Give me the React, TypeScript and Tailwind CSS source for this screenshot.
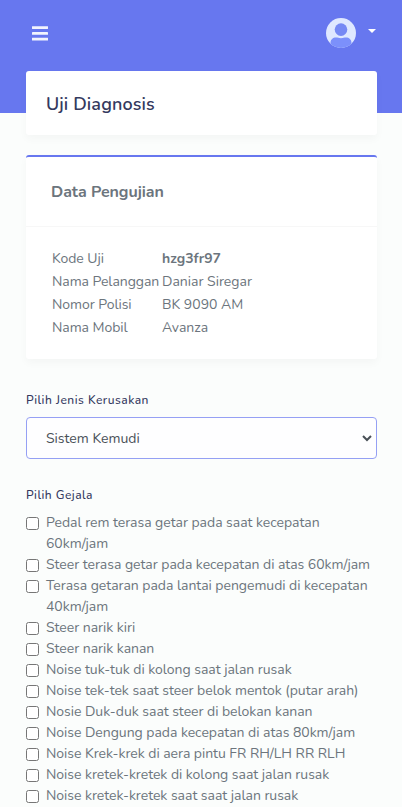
import React from "react";

const details: [string, string][] = [
  ["Kode Uji", "hzg3fr97"],
  ["Nama Pelanggan", "Daniar Siregar"],
  ["Nomor Polisi", "BK 9090 AM"],
  ["Nama Mobil", "Avanza"],
];

const symptoms = [
  "Pedal rem terasa getar pada saat kecepatan 60km/jam",
  "Steer terasa getar pada kecepatan di atas 60km/jam",
  "Terasa getaran pada lantai pengemudi di kecepatan 40km/jam",
  "Steer narik kiri",
  "Steer narik kanan",
  "Noise tuk-tuk di kolong saat jalan rusak",
  "Noise tek-tek saat steer belok mentok (putar arah)",
  "Nosie Duk-duk saat steer di belokan kanan",
  "Noise Dengung pada kecepatan di atas 80km/jam",
  "Noise Krek-krek di aera pintu FR RH/LH RR RLH",
  "Noise kretek-kretek di kolong saat jalan rusak",
  "Noise kretek-kretek saat saat jalan rusak",
];

function Navbar() {
  return (
    <header className="flex h-[71px] items-start justify-between pl-8 pr-[26px] pt-[18px]">
      <button aria-label="Menu" className="mt-2 w-4">
        <svg width="16" height="15" viewBox="0 0 16 15" fill="#f2f3fd">
          <rect width="16" height="2.7" y="0.2" rx="0.3" />
          <rect width="16" height="2.7" y="6.1" rx="0.3" />
          <rect width="16" height="2.7" y="11.8" rx="0.3" />
        </svg>
      </button>
      <button aria-label="Akun" className="flex items-start gap-3">
        <svg width="30" height="30" viewBox="0 0 30 30">
          <defs>
            <clipPath id="avatar">
              <circle cx="15" cy="15" r="15" />
            </clipPath>
          </defs>
          <g clipPath="url(#avatar)">
            <rect width="30" height="30" fill="#dfe8ff" />
            <circle cx="15" cy="11.6" r="6.3" fill="#7689f4" />
            <path d="M4.5 30V25c0-3.4 2.5-5.4 5.4-5.4 2 0 2.8.7 5.1.7s3.1-.7 5.1-.7c2.9 0 5.4 2 5.4 5.4v5z" fill="#7c90fb" />
          </g>
        </svg>
        <span className="mt-[11px] h-0 w-0 border-x-[4px] border-t-[4px] border-x-transparent border-t-white" />
      </button>
    </header>
  );
}

export default function App() {
  return (
    <div className="h-[807px] overflow-hidden bg-[#fbfdfc] bg-[linear-gradient(#6777ef,#6777ef)] bg-[length:100%_113px] bg-no-repeat font-['Nunito','Lato',sans-serif] text-[14px] leading-[21px] text-[#6c757d]">
      <Navbar />
      <main className="pl-[26px] pr-[25px]">
        <section className="flex h-16 items-center rounded-[3px] bg-white px-5 pt-0.5 shadow-[0_4px_8px_rgba(0,0,0,0.03)]">
          <h1 className="text-[18px] font-semibold leading-[22px] tracking-[0.12px] text-[#34395e]">Uji Diagnosis</h1>
        </section>

        <section className="mt-5 h-[204px] rounded-[3px] border-t-2 border-[#6777ef] bg-white shadow-[0_4px_8px_rgba(0,0,0,0.03)]">
          <div className="flex h-[70px] items-center border-b border-[#f7f7f7] px-[25px]">
            <h4 className="text-[16px] font-bold leading-7 tracking-[-0.05px]">Data Pengujian</h4>
          </div>
          <dl className="grid grid-cols-[110px_1fr] gap-y-0.5 px-[26px] pt-[21px]">
            {details.map(([name, value], i) => (
              <React.Fragment key={name}>
                <dt className="whitespace-nowrap tracking-[-0.06px]">{name}</dt>
                <dd className={i === 0 ? "font-bold" : ""}>{value}</dd>
              </React.Fragment>
            ))}
          </dl>
        </section>

        <label className="mt-8 block text-[12px] font-medium leading-[18px] tracking-[0.5px] text-[#34395e]">
          Pilih Jenis Kerusakan
        </label>
        <div className="relative mt-2">
          <select className="block h-[42px] w-full appearance-none rounded-[4px] border border-[#95a0f4] bg-[#fefeff] px-[19px] py-[10px] text-[14px] text-[#495057] outline-none">
            <option>Sistem Kemudi</option>
          </select>
          <svg className="pointer-events-none absolute right-[5px] top-[18px]" width="10" height="7" viewBox="0 0 10 7" fill="none" stroke="#495057" strokeWidth="2">
            <path d="M1 1l4 4 4-4" />
          </svg>
        </div>

        <p className="mt-[27px] text-[12px] font-medium leading-[18px] tracking-[0.46px] text-[#34395e]">Pilih Gejala</p>
        <ul className="mt-2">
          {symptoms.map((text) => (
            <li key={text}>
              <label className="flex items-start gap-[7px]">
                <input type="checkbox" className="mt-[5px] h-[13px] w-[13px] shrink-0" />
                <span className="tracking-[-0.035px]">{text}</span>
              </label>
            </li>
          ))}
        </ul>
      </main>
    </div>
  );
}
